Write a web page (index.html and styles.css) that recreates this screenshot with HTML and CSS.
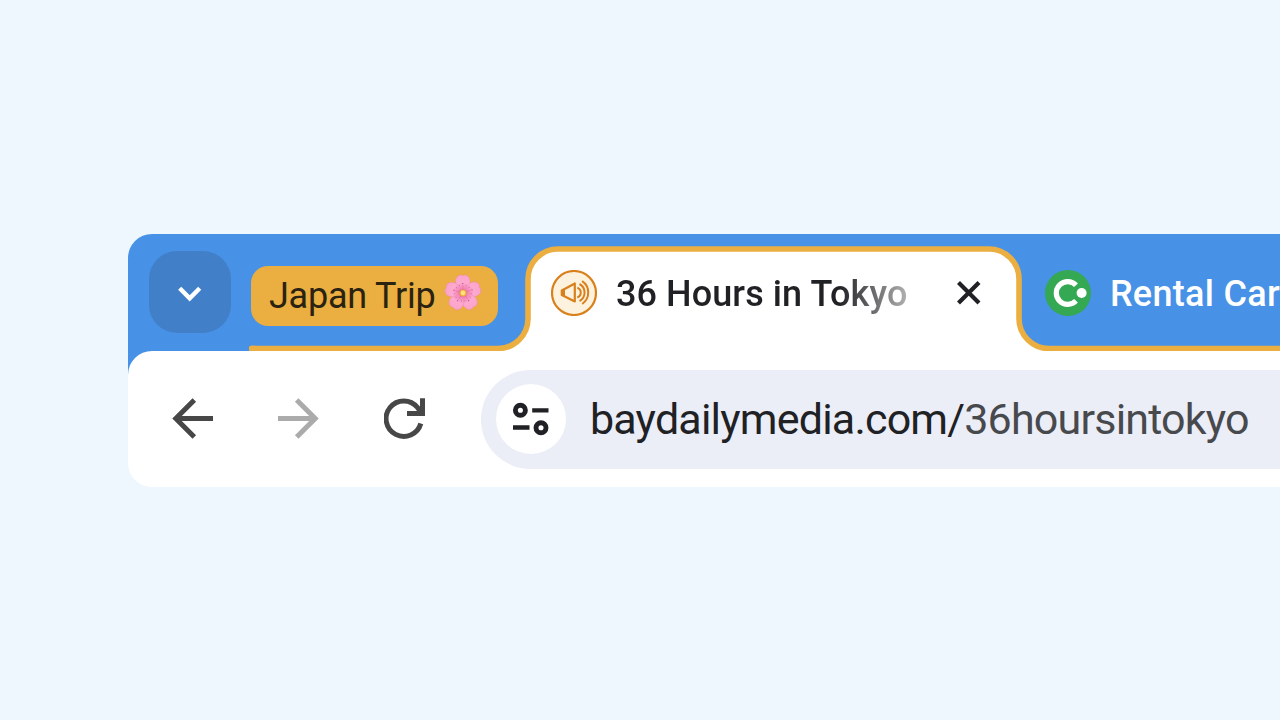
FILE: index.html
```html
<!DOCTYPE html>
<html lang="en">
<head>
<meta charset="utf-8">
<title>36 Hours in Tokyo</title>
<link rel="stylesheet" href="styles.css">
</head>
<body>
<main class="browser">
  <header class="tabstrip">
    <svg class="outline" width="1152" height="118" viewBox="128 234 1152 118">
      <path d="M500 348.5A28 28 0 0 0 528 320.5V279A30 30 0 0 1 558 249H989A30 30 0 0 1 1019 279V318.5A30 30 0 0 0 1049 348.5V352H500Z" fill="#fff"/>
      <path d="M251 348.6H498A30 30 0 0 0 528 318.6V279A30 30 0 0 1 558 249H989A30 30 0 0 1 1019 279V318.6A30 30 0 0 0 1049 348.6H1290" fill="none" stroke="#ebae40" stroke-width="5.6" stroke-linecap="butt"/>
      <rect x="249" y="345.8" width="8" height="5.6" rx="1.5" fill="#ebae40"/>
    </svg>
    <button class="search" aria-label="Search tabs">
      <svg width="24" height="16" viewBox="0 0 24 16"><path d="M1.700 2.300 11.700 12.300 21.700 2.300" fill="none" stroke="#fff" stroke-width="4.400"/></svg>
    </button>
    <div class="group">
      <span class="group-name">Japan Trip</span>
      <svg class="blossom" width="38" height="38" viewBox="-19 -19 38 38">
        <defs>
          <radialGradient id="petal" gradientUnits="userSpaceOnUse" cx="0" cy="0" r="18">
            <stop offset="0" stop-color="#e0508f"/><stop offset=".3" stop-color="#f48bbb"/><stop offset=".6" stop-color="#fda9d0"/><stop offset="1" stop-color="#fba3cb"/>
          </radialGradient>
          <g id="leaf">
            <path d="M0 0C-3-2.500-8.300-8-7-13.500C-6-17.500-2.300-19 0-17.300C2.300-19 6-17.500 7-13.500C8.300-8 3-2.500 0 0Z" fill="url(#petal)" stroke="#ee86b6" stroke-width=".4"/>
            <path d="M0-3V-8" stroke="#d95f97" stroke-width=".4"/>
            <circle cy="-9.500" r=".55" fill="#9d3c6c"/><circle cx="-3.200" cy="-7.500" r=".4" fill="#a84a78"/><circle cx="3.200" cy="-7.500" r=".4" fill="#a84a78"/>
          </g>
        </defs>
        <use href="#leaf" transform="rotate(-1)"/><use href="#leaf" transform="rotate(71)"/><use href="#leaf" transform="rotate(143)"/><use href="#leaf" transform="rotate(215)"/><use href="#leaf" transform="rotate(287)"/>
        <circle r="3.600" fill="#eda53b"/><circle r="2.400" fill="#ffe27a"/>
      </svg>
    </div>
    <div class="tab active">
      <svg class="favicon" width="46" height="46" viewBox="0 0 46 46">
        <circle cx="23" cy="23" r="22" fill="#fdf2de" stroke="#d9801c" stroke-width="2.200"/>
        <g fill="none" stroke="#d9801c" stroke-width="2.200" stroke-linejoin="round">
          <path d="M10.800 20.500 23.800 13.500V31.500L10.800 25Z"/>
          <path d="M26.300 17.700A5.200 5.200 0 0 1 26.300 27.500M28.500 14A9.800 9.800 0 0 1 28.500 31.200M31.200 11.200A13.800 13.800 0 0 1 31.200 34" stroke-width="2"/>
        </g>
        <path d="M10 20 14 18.200V27L10 25.500Z" fill="#d9801c"/>
      </svg>
      <span class="title">36 Hours in Tokyo</span>
      <svg class="close" width="24" height="24" viewBox="0 0 24 24"><path d="M1.500 1.500 22 22M22 1.500 1.500 22" stroke="#202124" stroke-width="4.200"/></svg>
    </div>
    <div class="tab">
      <svg class="favicon" width="46" height="46" viewBox="0 0 46 46">
        <circle cx="23" cy="23" r="23" fill="#34a853"/>
        <path d="M31 15.200A11.400 11.400 0 1 0 31 30.800" fill="none" stroke="#fff" stroke-width="5.200"/>
        <circle cx="36.600" cy="23" r="5" fill="#fff"/>
      </svg>
      <span class="next-title">Rental Car</span>
    </div>
  </header>
  <nav class="toolbar">
    <svg class="back" width="42" height="42" viewBox="0 0 42 42"><path d="M41 20.500H4M22.300 2 3.800 20.500 22.300 39" fill="none" stroke="#474747" stroke-width="5"/></svg>
    <svg class="forward" width="42" height="42" viewBox="0 0 42 42"><path d="M0 20.500H37M18.700 2 37.200 20.500 18.700 39" fill="none" stroke="#ababab" stroke-width="5"/></svg>
    <svg class="reload" width="42" height="42" viewBox="0 0 42 42"><g fill="none" stroke="#474747" stroke-width="5"><path d="M36.800 25.500A17.700 17.700 0 1 1 33.500 9.500L38 15.500"/><path d="M23 15.500H38.500V.3"/></g></svg>
    <div class="omnibox">
      <span class="site">
        <svg width="38" height="34" viewBox="0 0 38 34"><g fill="none" stroke="#202124" stroke-width="4.900"><circle cx="8.400" cy="8.200" r="5"/><path d="M20.200 8.300H36.500M1 25.500H17.500" stroke-width="4.300"/><circle cx="29" cy="25.800" r="5"/></g></svg>
      </span>
      <span class="url"><span class="host">baydailymedia.com/</span><span class="path">36hoursintokyo</span></span>
    </div>
  </nav>
</main>
</body>
</html>
```
FILE: styles.css
```css
* { box-sizing: border-box; }

body {
  margin: 0;
  height: 720px;
  padding: 234px 0 0 128px;
  overflow: hidden;
  background: #eef6fe;
  font-family: Roboto, "Noto Sans", sans-serif;
  color: #202124;
}

svg { display: block; flex: none; }

.browser {
  width: 1152px;
  height: 253px;
  overflow: hidden;
  border-radius: 24px 0 0 24px;
  background: linear-gradient(#4791e6 150px, #fff 150px);
}

.tabstrip {
  position: relative;
  display: flex;
  align-items: flex-start;
  height: 117px;
  padding-left: 20.500px;
}

.outline { position: absolute; left: 0; top: 0; }

.search {
  display: grid;
  place-items: center;
  flex: none;
  width: 82px;
  height: 82px;
  margin-top: 17.400px;
  padding: 3px 0 0;
  border: 0;
  border-radius: 28px;
  background: #4180c8;
}

.group {
  display: flex;
  align-items: flex-start;
  flex: none;
  width: 247.500px;
  height: 60px;
  margin: 32px 0 0 20.400px;
  padding-left: 18px;
  border-radius: 17px;
  background: #ebae40;
}

.group-name {
  width: 175px;
  font-size: 36px;
  line-height: 60px;
  letter-spacing: -0.2px;
  white-space: nowrap;
  color: #2a2312;
}

.blossom { margin-top: 8px; }

.tab {
  position: relative;
  display: flex;
  align-items: center;
  flex: none;
  height: 46px;
  margin: 36px 0 0 52.500px;
  font-size: 36px;
  font-weight: 500;
  white-space: nowrap;
}

.tab + .tab { margin: 35.700px 0 0 64.500px; color: #fff; }

.title {
  width: 293px;
  margin-left: 19px;
  padding-top: 1px;
  letter-spacing: 0.1px;
  background: linear-gradient(90deg, #202124 76%, #b5b5b5 100%);
  -webkit-background-clip: text;
  background-clip: text;
  color: transparent;
}

.close { margin-left: 48px; }

.next-title {
  margin-left: 18.500px;
  padding-top: 2px;
  letter-spacing: 0.3px;
}

.toolbar {
  position: relative;
  display: flex;
  align-items: center;
  height: 136px;
  padding-left: 44px;
  border-radius: 24px 0 0 24px;
  background: #fff;
}

.forward, .reload { margin-left: 64px; }

.omnibox {
  display: flex;
  align-items: center;
  flex: none;
  width: 840px;
  height: 99px;
  margin-left: 55px;
  padding-left: 15px;
  border-radius: 50px 0 0 50px;
  background: #ebedf7;
}

.site {
  display: grid;
  place-items: center;
  flex: none;
  width: 70px;
  height: 70px;
  border-radius: 50%;
  background: #fff;
}

.url {
  margin-left: 24px;
  font-size: 43px;
  letter-spacing: -0.8px;
  white-space: nowrap;
}

.path { color: #47494c; }
```
